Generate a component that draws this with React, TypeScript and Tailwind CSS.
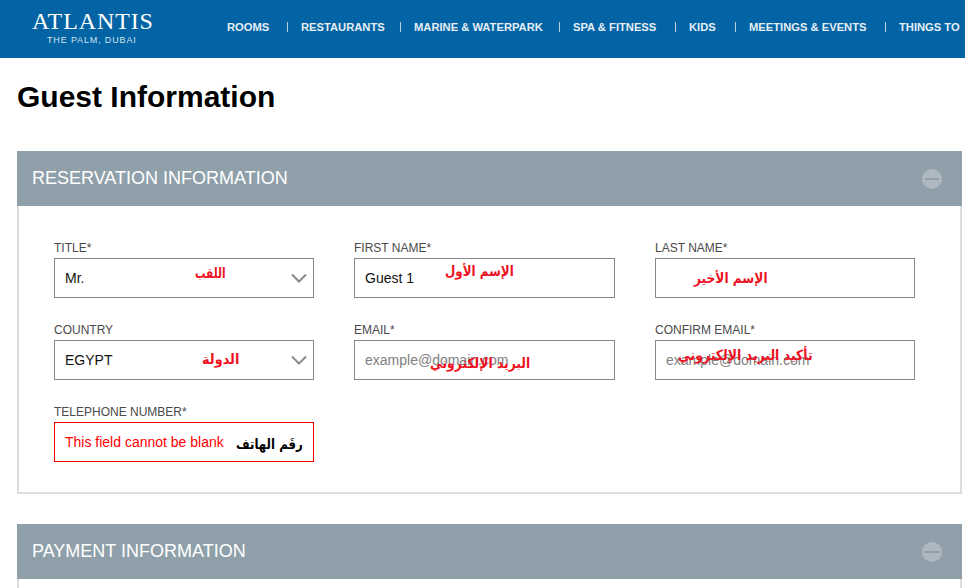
const nav = [
  { label: "ROOMS", width: "w-[42px]" },
  { label: "RESTAURANTS", width: "w-[81px]" },
  { label: "MARINE & WATERPARK", width: "w-[127px]" },
  { label: "SPA & FITNESS", width: "w-[84px]" },
  { label: "KIDS", width: "w-[28px]" },
  { label: "MEETINGS & EVENTS", width: "w-[118px]" },
  { label: "THINGS TO", width: "w-[63px]" },
];

function Chevron() {
  return (
    <svg width="16" height="10" viewBox="0 0 16 10" className="absolute right-[6px] top-[14px]" fill="none">
      <path d="M1 1.5 L8 8.5 L15 1.5" stroke="#8a8a8a" strokeWidth="2" />
    </svg>
  );
}

function Minus() {
  return (
    <div className="w-5 h-5 rounded-full bg-[#aeb8c1] flex items-center justify-center">
      <div className="w-[14px] h-[2px] bg-[#929fa8]" />
    </div>
  );
}

function Note({ children, className }: { children: string; className: string }) {
  return (
    <span dir="rtl" className={"absolute origin-left whitespace-nowrap font-bold text-[14px] leading-none font-['DejaVu_Sans',sans-serif] " + className}>
      {children}
    </span>
  );
}

function Field({ label, value, muted, select, error, children }: { label: string; value?: string; muted?: boolean; select?: boolean; error?: boolean; children?: React.ReactNode }) {
  return (
    <div>
      <div className="text-[12px] leading-[14px] h-[18px] pt-[1px] text-[#4a4a4a]">{label}</div>
      <div className={"relative h-10 border flex items-center pl-[10px] text-[14px] " + (error ? "border-[#ff0000] text-[#ff0000]" : "border-[#888888] " + (muted ? "text-[#808080]" : "text-[#111111]"))}>
        <span>{value}</span>
        {select && <Chevron />}
        {children}
      </div>
    </div>
  );
}

function PanelHead({ title }: { title: string }) {
  return (
    <div className="h-[55px] bg-[#90a0aa] flex items-center justify-between pl-[15px] pr-5 text-white text-[18px]">
      <span>{title}</span>
      <Minus />
    </div>
  );
}

export default function App() {
  return (
    <div className="w-[965px] h-[588px] overflow-hidden bg-white font-['Liberation_Sans',Arial,sans-serif]">
      <header className="h-[58px] bg-[#0264a4] flex items-center text-white">
        <div className="w-[227px] shrink-0 pl-8 flex flex-col items-start">
          <div className="font-['Liberation_Serif',serif] text-[24px] leading-[22px] tracking-[0.9px] whitespace-nowrap mt-[-3px]">ATLANTIS</div>
          <div className="text-[9px] leading-[10px] tracking-[0.85px] text-[#d5e3ee] ml-[15px] mt-[3px] whitespace-nowrap">THE PALM, DUBAI</div>
        </div>
        <nav className="flex items-center whitespace-nowrap text-[11.2px] font-bold text-[#e6eef5] mt-[-3px]">
          {nav.map((n, i) => (
            <div key={n.label} className="flex items-center">
              {i > 0 && <div className="w-px h-[10px] bg-[#b9cfe0] ml-[18px] mr-[13px]" />}
              <span className={n.width}>{n.label}</span>
            </div>
          ))}
        </nav>
      </header>

      <main className="pl-[17px] w-[962px]">
        <h1 className="text-[30px] leading-[34px] font-bold text-black pt-[22px] mb-[37px]">Guest Information</h1>

        <section>
          <PanelHead title="RESERVATION INFORMATION" />
          <div className="h-[288px] border-2 border-t-0 border-[#dddddd] pl-[35px] pt-[34px]">
            <div className="grid grid-cols-[260px_261px_260px] gap-x-10 gap-y-[24px]">
              <Field label="TITLE*" value="Mr." select>
                <Note className="left-[140px] top-[7px] text-[#ee1122] scale-x-[0.75]">اللقب</Note>
              </Field>
              <Field label="FIRST NAME*" value="Guest 1">
                <Note className="left-[90px] top-[5px] text-[#ee1122] scale-x-[0.85]">الإسم الأول</Note>
              </Field>
              <Field label="LAST NAME*">
                <Note className="left-[38px] top-[12px] text-[#ee1122] scale-x-[0.87]">الإسم الأخير</Note>
              </Field>
              <Field label="COUNTRY" value="EGYPT" select>
                <Note className="left-[147px] top-[11px] text-[#ee1122] scale-x-[0.92]">الدولة</Note>
              </Field>
              <Field label="EMAIL*" value="example@domain.com" muted>
                <Note className="left-[75px] top-[15px] text-[#ee1122] scale-x-[0.88]">البريد الإلكتروني</Note>
              </Field>
              <Field label="CONFIRM EMAIL*" value="example@domain.com" muted>
                <Note className="left-[22px] top-[7px] text-[#ee1122] scale-x-[0.89]">تأكيد البريد الإلكتروني</Note>
              </Field>
              <Field label="TELEPHONE NUMBER*" value="This field cannot be blank" error>
                <Note className="left-[181px] top-[14px] text-black scale-x-[0.84]">رقَم الهاتف</Note>
              </Field>
            </div>
          </div>
        </section>

        <section className="mt-[30px]">
          <PanelHead title="PAYMENT INFORMATION" />
          <div className="h-[20px] border-x-2 border-[#dddddd]" />
        </section>
      </main>
    </div>
  );
}
